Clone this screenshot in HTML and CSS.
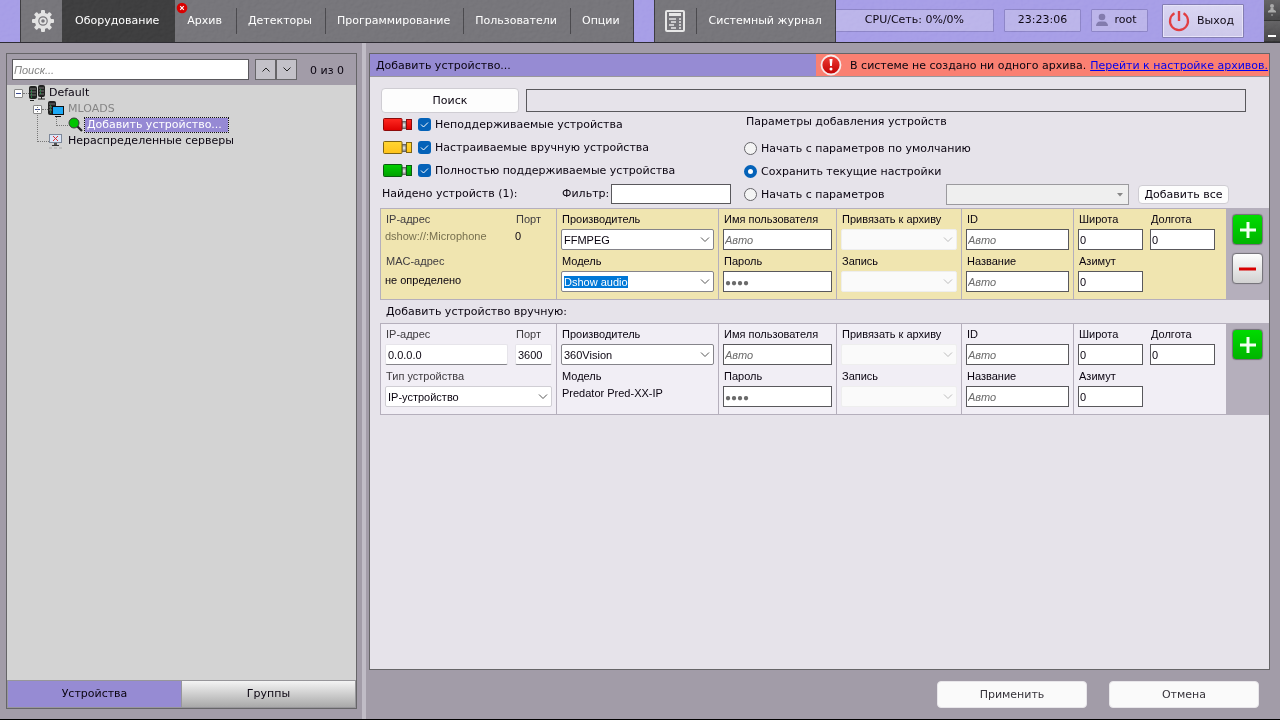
FILE: index.html
```html
<!DOCTYPE html>
<html lang="ru">
<head>
<meta charset="utf-8">
<title>Оборудование</title>
<link rel="stylesheet" href="styles.css">
</head>
<body>
<svg class="defs" aria-hidden="true">
  <defs>
    <linearGradient id="gRed" x1="0" y1="0" x2="0" y2="1"><stop offset="0" stop-color="#ff2a22"/><stop offset="1" stop-color="#de0000"/></linearGradient>
    <linearGradient id="gYellow" x1="0" y1="0" x2="0" y2="1"><stop offset="0" stop-color="#ffd633"/><stop offset="1" stop-color="#ffc21a"/></linearGradient>
    <linearGradient id="gGreen" x1="0" y1="0" x2="0" y2="1"><stop offset="0" stop-color="#00d000"/><stop offset="1" stop-color="#00a000"/></linearGradient>
    <linearGradient id="gAlert" x1="0" y1="0" x2="0" y2="1"><stop offset="0" stop-color="#f04038"/><stop offset="1" stop-color="#c00000"/></linearGradient>
    <linearGradient id="gPipe" x1="0" y1="0" x2="0" y2="1"><stop offset="0" stop-color="#777"/><stop offset=".5" stop-color="#eee"/><stop offset="1" stop-color="#777"/></linearGradient>
    <filter id="grain" x="0" y="0" width="100%" height="100%">
      <feTurbulence type="fractalNoise" baseFrequency="0.22 0.28" numOctaves="3" seed="4" result="n"/>
      <feDiffuseLighting in="n" surfaceScale="1" diffuseConstant="1" lighting-color="#ffffff"><feDistantLight azimuth="225" elevation="32"/></feDiffuseLighting>
    </filter>
  </defs>
</svg>

<header class="topbar">
  <svg class="texture" aria-hidden="true"><rect width="100%" height="100%" filter="url(#grain)"/></svg>
  <nav class="tabs" aria-label="Разделы">
    <button class="tab tab-icon" aria-label="Настройки">
      <svg width="24" height="24" viewBox="0 0 24 24"><g fill="#e2e2e2"><rect x="10" y="1" width="4" height="5" rx="1"/><rect x="10" y="18" width="4" height="5" rx="1"/><rect x="1" y="10" width="5" height="4" rx="1"/><rect x="18" y="10" width="5" height="4" rx="1"/><g transform="rotate(45 12 12)"><rect x="10" y="1" width="4" height="5" rx="1"/><rect x="10" y="18" width="4" height="5" rx="1"/><rect x="1" y="10" width="5" height="4" rx="1"/><rect x="18" y="10" width="5" height="4" rx="1"/></g></g><circle cx="12" cy="12" r="6.5" fill="#747378" stroke="#e2e2e2" stroke-width="3.4"/><circle cx="12" cy="12" r="2.7" fill="none" stroke="#e2e2e2" stroke-width="1.8"/></svg>
    </button>
    <button class="tab active">Оборудование</button>
    <button class="tab flagged">Архив
      <svg class="flag" width="12" height="12" viewBox="0 0 12 12"><circle cx="6" cy="6" r="5.3" fill="#d80000"/><path d="M4.200 4.200l3.600 3.600M7.800 4.200l-3.600 3.600" stroke="#fff" stroke-width="1.100"/></svg>
    </button>
    <button class="tab">Детекторы</button>
    <button class="tab">Программирование</button>
    <button class="tab">Пользователи</button>
    <button class="tab">Опции</button>
  </nav>
  <div class="tabs">
    <button class="tab tab-icon" aria-label="Журнал">
      <svg width="20" height="22" viewBox="0 0 20 22" fill="none" stroke="#e6e6e6"><rect x="1" y="1" width="18" height="20" rx="1" stroke-width="2"/><path d="M4 4.500h12" stroke-width="3"/><path d="M4 9h7M6 12h5M4 15h5M6 18h5" stroke-width="1.600"/><path d="M14 9h2M14 12h2M14 15h2M14 18h2" stroke-width="1.600"/></svg>
    </button>
    <button class="tab log">Системный журнал</button>
  </div>
  <div class="status">
    <div class="box cpu">CPU/Сеть: 0%/0%</div>
    <div class="box clock">23:23:06</div>
    <div class="box user"><svg width="12" height="14" viewBox="0 0 12 14" fill="#7f78ab"><circle cx="6" cy="4" r="3.300"/><path d="M0 13c0-3 2-4.500 4-4.500h4c2 0 4 1.500 4 4.500z"/></svg>root</div>
    <button class="exit"><svg width="22" height="22" viewBox="0 0 22 22" fill="none" stroke="#e03a3e" stroke-width="2.200"><path d="M6.500 3.300a9 9 0 1 0 9 0"/><path d="M11 1v10" stroke-width="2.400"/></svg>Выход</button>
  </div>
  <div class="window-buttons">
    <button aria-label="Закрепить"><svg width="8" height="12" viewBox="0 0 8 12" fill="#a8a8a8"><circle cx="4" cy="2" r="2"/><path d="M2.500 4h3v1.500L8 7v1.500H0V7l2.500-1.500zM3.500 10h1v2h-1z"/></svg></button>
    <button aria-label="Свернуть"><span class="dash"></span></button>
  </div>
</header>

<main class="workspace">
  <aside class="panel sidebar">
    <div class="tree-search">
      <input type="text" class="text" placeholder="Поиск..." aria-label="Поиск">
      <div class="steps">
        <button aria-label="Предыдущее"><svg width="8" height="5" viewBox="0 0 8 5"><path d="M.5 4.500L4 1l3.500 3.500" fill="none" stroke="#222"/></svg></button>
        <button aria-label="Следующее"><svg width="8" height="5" viewBox="0 0 8 5"><path d="M.5.500L4 4 7.500.500" fill="none" stroke="#222"/></svg></button>
      </div>
      <span>0 из 0</span>
    </div>
    <ul class="tree">
      <li>
        <div class="node root-node"><button class="toggle" aria-label="Свернуть Default"></button><i class="link"></i>
          <svg width="16" height="16" viewBox="0 0 16 16"><rect x="0" y="1" width="8" height="13" rx="2" fill="#222"/><rect x="9" y="0" width="7" height="12" rx="2" fill="#222"/><path d="M1 4h6M1 7h6M1 10h6M10 3h5M10 6h5M10 9h5" stroke="#777"/><path d="M2 12h1M2 9h1M2 6h1M11 8h1M11 5h1" stroke="#1fd45a"/><path d="M1 15.500h4M12.500 11v3M9 14h7" stroke="#222"/></svg>
          <span>Default</span></div>
        <ul>
          <li class="branch">
            <div class="node"><button class="toggle" aria-label="Свернуть MLOADS"></button><i class="link"></i>
              <svg width="16" height="16" viewBox="0 0 16 16"><rect x="0" y="0" width="8" height="14" rx="2" fill="#222"/><path d="M1 3h6M1 6h3M1 9h3" stroke="#777"/><path d="M2 8h1M2 11h1M2 5h1" stroke="#1fd45a"/><rect x="4.500" y="5.500" width="11" height="8" fill="#1aa9f5" stroke="#111"/><path d="M7 15.500h6" stroke="#111"/></svg>
              <span class="dim">MLOADS</span></div>
            <ul>
              <li class="leaf"><div class="node"><svg width="16" height="16" viewBox="0 0 16 16"><circle cx="6" cy="6" r="5" fill="#00c400" stroke="#3a3a3a"/><path d="M9.500 9.500L14 14" stroke="#222" stroke-width="2.200"/></svg><span class="chosen">Добавить устройство...</span></div></li>
            </ul>
          </li>
          <li class="servers"><div class="node"><svg width="16" height="16" viewBox="0 0 16 16"><rect x="1.500" y="1.500" width="12" height="8" fill="#dbe5f7" stroke="#7c8799"/><path d="M5 3l5 5M10 3l-5 5" stroke="#e03030"/><path d="M7.500 10v2" stroke="#555" stroke-width="3"/><path d="M4 12.500h7" stroke="#333"/><path d="M1 15h13" stroke="#aaa" stroke-dasharray="3 2"/></svg><span>Нераспределенные серверы</span></div></li>
        </ul>
      </li>
    </ul>
    <div class="views">
      <button class="selected">Устройства</button>
      <button>Группы</button>
    </div>
  </aside>

  <div class="splitter"></div>

  <section class="content">
    <div class="panel detail">
      <div class="title">
        <h1>Добавить устройство...</h1>
        <div class="alert"><svg width="22" height="22" viewBox="0 0 22 22"><circle cx="11" cy="11" r="9.500" fill="url(#gAlert)" stroke="#f6eaea" stroke-width="1.800"/><path d="M9.500 5h3l-.6 7h-1.800z" fill="#fff"/><circle cx="11" cy="15" r="1.500" fill="#fff"/></svg><span>В системе не создано ни одного архива.</span><a href="#">Перейти к настройке архивов.</a></div>
      </div>

      <div class="search"><button class="push">Поиск</button><input type="text" class="text range" aria-label="Диапазон поиска" readonly></div>

      <div class="options">
        <div class="filters">
          <label><svg width="30" height="14" viewBox="0 0 30 14"><rect x="19" y="3.500" width="4" height="7" fill="url(#gPipe)" stroke="#666"/><rect x=".5" y=".5" width="18.500" height="12" rx="1" fill="url(#gRed)" stroke="#8c0a0a"/><rect x="23.500" y="1.500" width="5" height="10" fill="url(#gRed)" stroke="#8c0a0a"/></svg><input type="checkbox" checked>Неподдерживаемые устройства</label>
          <label><svg width="30" height="14" viewBox="0 0 30 14"><rect x="19" y="3.500" width="4" height="7" fill="url(#gPipe)" stroke="#666"/><rect x=".5" y=".5" width="18.500" height="12" rx="1" fill="url(#gYellow)" stroke="#7d6414"/><rect x="23.500" y="1.500" width="5" height="10" fill="url(#gYellow)" stroke="#7d6414"/></svg><input type="checkbox" checked>Настраиваемые вручную устройства</label>
          <label><svg width="30" height="14" viewBox="0 0 30 14"><rect x="19" y="3.500" width="4" height="7" fill="url(#gPipe)" stroke="#666"/><rect x=".5" y=".5" width="18.500" height="12" rx="1" fill="url(#gGreen)" stroke="#0b5a10"/><rect x="23.500" y="1.500" width="5" height="10" fill="url(#gGreen)" stroke="#0b5a10"/></svg><input type="checkbox" checked>Полностью поддерживаемые устройства</label>
          <div class="found"><span>Найдено устройств (1):</span><label for="filter">Фильтр:</label><input type="text" class="text" id="filter"></div>
        </div>
        <fieldset class="params">
          <legend>Параметры добавления устройств</legend>
          <label><input type="radio" name="p">Начать с параметров по умолчанию</label>
          <label><input type="radio" name="p" checked>Сохранить текущие настройки</label>
          <div class="preset"><label><input type="radio" name="p">Начать с параметров</label><select class="flat" disabled aria-label="Параметры"><option></option></select><button class="push small">Добавить все</button></div>
        </fieldset>
      </div>

      <div class="device found-device">
        <div class="cell">
          <div class="pair"><div class="field soft"><b>IP-адрес</b><span class="value faint">dshow://:Microphone</span></div><div class="field soft port"><b>Порт</b><span class="value">0</span></div></div>
          <div class="field soft"><b>MAC-адрес</b><span class="value low">не определено</span></div>
        </div>
        <div class="cell">
          <div class="field"><label for="v1">Производитель</label><select id="v1" class="combo"><option>FFMPEG</option></select></div>
          <div class="field"><label for="m1">Модель</label><input type="text" role="combobox" aria-expanded="false" id="m1" class="combo" value="Dshow audio"></div>
        </div>
        <div class="cell">
          <div class="field"><label for="u1">Имя пользователя</label><input type="text" id="u1" class="text" placeholder="Авто"></div>
          <div class="field"><label for="w1">Пароль</label><input type="text" id="w1" class="text secret" placeholder="●●●●"></div>
        </div>
        <div class="cell">
          <div class="field"><label for="a1">Привязать к архиву</label><select id="a1" class="combo" disabled><option></option></select></div>
          <div class="field"><label for="r1">Запись</label><select id="r1" class="combo" disabled><option></option></select></div>
        </div>
        <div class="cell">
          <div class="field"><label for="i1">ID</label><input type="text" id="i1" class="text" placeholder="Авто"></div>
          <div class="field"><label for="n1">Название</label><input type="text" id="n1" class="text" placeholder="Авто"></div>
        </div>
        <div class="cell geo">
          <div class="field"><label for="la1">Широта</label><input type="text" id="la1" class="text" value="0"></div>
          <div class="field"><label for="lo1">Долгота</label><input type="text" id="lo1" class="text" value="0"></div>
          <div class="field"><label for="az1">Азимут</label><input type="text" id="az1" class="text" value="0"></div>
        </div>
        <div class="actions">
          <button class="add" aria-label="Добавить"><svg width="18" height="18" viewBox="0 0 18 18"><path d="M9 1v16M1 9h16" stroke="#f2fff2" stroke-width="3"/></svg></button>
          <button class="remove" aria-label="Удалить"><svg width="18" height="18" viewBox="0 0 18 18"><path d="M0 9h17" stroke="#d80000" stroke-width="3"/></svg></button>
        </div>
      </div>

      <h2 class="manual-title">Добавить устройство вручную:</h2>

      <div class="device">
        <div class="cell">
          <div class="pair"><div class="field soft"><label for="ip2">IP-адрес</label><input type="text" id="ip2" class="line" value="0.0.0.0"></div><div class="field soft port"><label for="po2">Порт</label><input type="text" id="po2" class="line" value="3600"></div></div>
          <div class="field soft"><label for="t2">Тип устройства</label><select id="t2" class="combo light"><option>IP-устройство</option></select></div>
        </div>
        <div class="cell">
          <div class="field"><label for="v2">Производитель</label><select id="v2" class="combo"><option>360Vision</option></select></div>
          <div class="field"><b>Модель</b><span class="value inset">Predator Pred-XX-IP</span></div>
        </div>
        <div class="cell">
          <div class="field"><label for="u2">Имя пользователя</label><input type="text" id="u2" class="text" placeholder="Авто"></div>
          <div class="field"><label for="w2">Пароль</label><input type="text" id="w2" class="text secret" placeholder="●●●●"></div>
        </div>
        <div class="cell">
          <div class="field"><label for="a2">Привязать к архиву</label><select id="a2" class="combo" disabled><option></option></select></div>
          <div class="field"><label for="r2">Запись</label><select id="r2" class="combo" disabled><option></option></select></div>
        </div>
        <div class="cell">
          <div class="field"><label for="i2">ID</label><input type="text" id="i2" class="text" placeholder="Авто"></div>
          <div class="field"><label for="n2">Название</label><input type="text" id="n2" class="text" placeholder="Авто"></div>
        </div>
        <div class="cell geo">
          <div class="field"><label for="la2">Широта</label><input type="text" id="la2" class="text" value="0"></div>
          <div class="field"><label for="lo2">Долгота</label><input type="text" id="lo2" class="text" value="0"></div>
          <div class="field"><label for="az2">Азимут</label><input type="text" id="az2" class="text" value="0"></div>
        </div>
        <div class="actions">
          <button class="add" aria-label="Добавить"><svg width="18" height="18" viewBox="0 0 18 18"><path d="M9 1v16M1 9h16" stroke="#f2fff2" stroke-width="3"/></svg></button>
        </div>
      </div>
    </div>
    <div class="footer"><button>Применить</button><button>Отмена</button></div>
  </section>
</main>
<script src="app.js"></script>
</body>
</html>
```
FILE: app.js
```js
// Start with the model name selected, ready to be replaced.
const model = document.getElementById('m1');
model.focus();
model.select();
```
FILE: styles.css
```css
* { box-sizing: border-box; }
body {
  margin: 0;
  min-height: 100vh;
  display: flex;
  flex-direction: column;
  background: #a29ca8;
  border-bottom: 1px solid #000;
  color: #0a0410;
  font: 11px/14px "DejaVu Sans", sans-serif;
}
button, input, select { font: inherit; color: inherit; margin: 0; padding: 0; min-width: 0; }
button { border: 0; background: none; }
svg { display: block; flex: none; }
ul { list-style: none; margin: 0; padding: 0; }
.defs { position: absolute; width: 0; height: 0; }

/* Top bar */
.topbar {
  position: relative;
  display: flex;
  height: 43px;
  padding-left: 20px;
  background: #a59ce6;
  border-bottom: 1px solid #2e2c33;
}
.texture { position: absolute; z-index: 1; left: 0; top: 0; width: 100%; height: 100%; mix-blend-mode: soft-light; opacity: .12; pointer-events: none; }
.tabs { display: flex; background: #747378; border: solid #3a393d; border-width: 0 1px; margin-right: 20px; flex: none; }
.tab { position: relative; padding: 0 13px 0 12px; color: #fff; white-space: nowrap; }
.tab-icon { width: 41px; padding: 0 9px 0 10px; }
.tab.active { padding: 0 16px 0 13px; background: #3b3b3c; }
.tab.flagged { padding-right: 14px; }
.tab + .tab:not(.active):not(.flagged)::before { content: ""; position: absolute; left: 0; top: 8px; bottom: 8px; width: 1px; background: #47464a; }
.log { padding: 0 13px; }
.flag { position: absolute; left: 1px; top: 2px; }
.status { flex: 1; display: flex; align-items: center; gap: 10px; margin-left: -20px; padding-right: 20px; padding-bottom: 2px; }
.box { height: 23px; display: flex; align-items: center; justify-content: center; background: #bab3e9; border: 1px solid #8b83c6; border-radius: 1px; white-space: nowrap; }
.cpu { flex: 1; border-left: 0; }
.clock { width: 77px; }
.user { width: 57px; gap: 6px; padding-right: 6px; }
.exit { display: flex; align-items: center; justify-content: center; gap: 7px; padding-right: 4px; width: 82px; height: 34px; margin: 2px 0 0 4px; background: linear-gradient(#d9d5f2, #cbc6e9); border: 1px solid #817bb0; box-shadow: inset 0 0 0 1px #e6e2f8; border-radius: 1px; }
.window-buttons { width: 16px; display: flex; flex-direction: column; background: #515052; }
.window-buttons button { flex: 1; display: flex; align-items: center; justify-content: center; background: linear-gradient(#626163, #454446); border-bottom: 1px solid #333; }
.dash { width: 8px; height: 2px; margin-top: 10px; background: #fff; }

/* Workspace */
.workspace { flex: 1; display: flex; padding: 10px 10px 10px 6px; }
.panel { border: 1px solid #666568; display: flex; flex-direction: column; }
.sidebar { width: 351px; flex: none; background: #d3d3d3; }
.tree-search { display: flex; align-items: center; gap: 6px; height: 31px; padding: 0 5px; background: #a29ca8; }
.text { height: 21px; width: 100%; background: #fff; border: 1px solid #59585c; border-radius: 0; padding: 0 1px; outline: 0; }
.text::placeholder { color: #6b6b6b; font-style: italic; opacity: 1; }
.tree-search .text { flex: 0 1 237px; font-family: "Liberation Sans", sans-serif; }
.tree-search .text::placeholder { color: #858585; }
.steps { display: flex; }
.steps button { width: 21px; height: 21px; display: flex; align-items: center; justify-content: center; background: #c3c1c8; border: 1px solid #666568; }
.tree-search span { margin: 2px 0 0 7px; }
.tree { flex: 1; }
.node { display: flex; align-items: center; height: 16px; white-space: nowrap; }
.node > span { margin-left: 4px; }
.root-node { padding-left: 7px; }
.tree .branch > .node { padding-left: 26px; }
.leaf .node { padding-left: 61px; }
.servers .node { padding-left: 41px; }
.toggle { position: relative; width: 9px; height: 9px; background: #fff; border: 1px solid #888; border-radius: 1px; }
.toggle::after { content: ""; position: absolute; left: 1px; right: 1px; top: 3px; height: 1px; background: #3c4c90; }
.link { width: 6px; border-top: 1px dotted #777; }
.leaf, .servers, .branch { position: relative; }
.leaf::before { content: ""; position: absolute; left: 49px; top: 0; width: 11px; height: 8px; border: dotted #777; border-width: 0 0 1px 1px; }
.servers::before { content: ""; position: absolute; left: 30px; top: -28px; width: 11px; height: 36px; border: dotted #777; border-width: 0 0 1px 1px; }
.dim { color: #858585; }
.node > .chosen { margin-left: 1px; padding: 0 6px 0 2px; line-height: 14px; background: #9689d4; color: #fff; outline: 1px dotted #111; }
.views { display: flex; border: 1px solid #97969a; }
.views button { flex: 1; height: 26px; background: linear-gradient(#f4f4f4, #a9a9a9); }
.views .selected { background: #968bd3; border-right: 1px solid #97969a; }
.splitter { width: 4px; flex: none; margin: -10px 3px -10px 5px; background: #c0bcc6; }
.content { flex: 1; min-width: 0; display: flex; flex-direction: column; }
.detail { flex: 1; background: #e6e3ea; }
.title { display: flex; height: 23px; background: #968bd3; border-bottom: 1px solid #99979c; }
h1, h2 { margin: 0; font: inherit; }
h1 { flex: 1; padding: 5px 6px 3px; }
.alert { display: flex; align-items: center; background: #fa8072; padding: 0 1px 0 4px; white-space: nowrap; }
.alert span { margin: 2px 4px 0 8px; }
.alert a { margin-top: 2px; color: #0000f0; }
.search { display: flex; align-items: center; gap: 7px; padding: 11px 23px 0 11px; }
.push { width: 138px; height: 25px; background: #fdfdfd; border: 1px solid #cfcdd3; border-radius: 4px; }
.push.small { width: 91px; height: 19px; white-space: nowrap; margin-left: 9px; }
.range { flex: 1; height: 23px; background: #e6e3ea; }
.options { display: flex; padding: 0 40px 0 11px; }
.filters { width: 363px; flex: none; }
.filters > label { display: flex; align-items: center; height: 23px; padding-left: 2px; }
input[type="checkbox"], input[type="radio"] { appearance: none; flex: none; width: 13px; height: 13px; margin: 0 4px 0 0; }
input[type="checkbox"] { margin: 0 4px 0 5px; border-radius: 3px; background: #0462b8 url("data:image/svg+xml,%3Csvg xmlns='http://www.w3.org/2000/svg' viewBox='0 0 13 13'%3E%3Cpath d='M3 6.500l2.500 2.500L10 4.500' fill='none' stroke='white'/%3E%3C/svg%3E"); }
input[type="radio"] { border: 1px solid #66656a; border-radius: 50%; background: #f4f4f4; }
input[type="radio"]:checked { border: 4px solid #0462b8; background: #fff; }
.found { display: flex; align-items: center; height: 24px; }
.found span { width: 181px; padding-left: 1px; }
.found label { flex: 1; white-space: nowrap; }
.found .text { width: 120px; height: 20px; margin-right: 13px; }
.params { flex: 1; min-width: 0; border: 0; margin: 0; padding: 0; }
.params legend { padding: 2px 2px 0; height: 24px; line-height: 14px; }
.params label { display: flex; align-items: center; height: 23px; white-space: nowrap; }
.preset { display: flex; align-items: center; height: 23px; }
.preset label { width: 202px; flex: none; }
.flat { flex: 1; height: 21px; appearance: none; border: 1px solid #9b9a9e; border-radius: 0; opacity: 1; background: #efefef url("data:image/svg+xml,%3Csvg xmlns='http://www.w3.org/2000/svg' width='6' height='4'%3E%3Cpath d='M0 0h6L3 3.500z' fill='%23888'/%3E%3C/svg%3E") no-repeat right 5px center; }

/* Device rows */
.device { display: grid; grid-template-columns: 176fr 162fr 118fr 125fr 112fr 153fr 43px; margin: 0 0 0 10px; border: solid #b5afbc; border-width: 1px 0; background: #b5afbc; font-family: "Liberation Sans", sans-serif; }
.options + .device { margin-top: 2px; }
.cell { display: flex; flex-direction: column; gap: 4px; min-width: 0; padding: 3px 4px 7px 4px; border-left: 1px solid #b5afbc; background: #f1eef5; }
.found-device .cell { background: #f0e5b0; }
.field { display: flex; flex-direction: column; gap: 3px; min-width: 0; }
.field label, .field b { padding-left: 1px; font-weight: 400; white-space: nowrap; }
.soft label, .soft b { color: #3f3c40; }
.pair { display: grid; grid-template-columns: 1fr 37px; gap: 7px; }
.value { height: 21px; line-height: 14px; white-space: nowrap; }
.faint { color: #77704f; }
.inset { padding-left: 1px; }
.low { padding-top: 2px; }
.combo, .line { width: 100%; height: 21px; appearance: none; border: 1px solid #85848a; border-radius: 2px; padding: 0 18px 0 2px; background: #fff; outline: 0; }
.combo { background: #fff url("data:image/svg+xml,%3Csvg xmlns='http://www.w3.org/2000/svg' width='10' height='6'%3E%3Cpath d='M1 .5l4 4 4-4' fill='none' stroke='%23555'/%3E%3C/svg%3E") no-repeat right 3px center; }
.combo::selection { background: #0078d7; color: #fff; }
.combo:disabled { opacity: 1; border-color: #eee; background: #fafafa url("data:image/svg+xml,%3Csvg xmlns='http://www.w3.org/2000/svg' width='10' height='6'%3E%3Cpath d='M1 .5l4 4 4-4' fill='none' stroke='%23bbb'/%3E%3C/svg%3E") no-repeat right 3px center; }
.light { border-color: #d0ced4; }
.line { border-color: #e6e4ea; border-bottom-color: #85848a; padding: 0 2px; }
.secret::placeholder { font-size: 10px; }
.geo { display: grid; grid-template-columns: 1fr 1fr; gap: 4px 7px; padding-right: 11px; }
.actions { display: flex; flex-direction: column; align-items: center; gap: 8px; padding-top: 5px; }
.actions button { width: 31px; height: 31px; display: flex; align-items: center; justify-content: center; border: 1px solid #77757c; border-radius: 4px; box-shadow: 0 0 1px #77757c; }
.add { background: linear-gradient(#00dc00, #00b400); }
.remove { background: linear-gradient(#fdfdfd, #d2d2d2); }
.manual-title { padding: 5px 16px 4px; }
.footer { display: flex; justify-content: flex-end; gap: 22px; padding: 11px 11px 1px 0; }
.footer button { width: 150px; height: 27px; background: #fafafa; border: 1px solid #e8e6ea; border-radius: 4px; color: #37343b; }
```
